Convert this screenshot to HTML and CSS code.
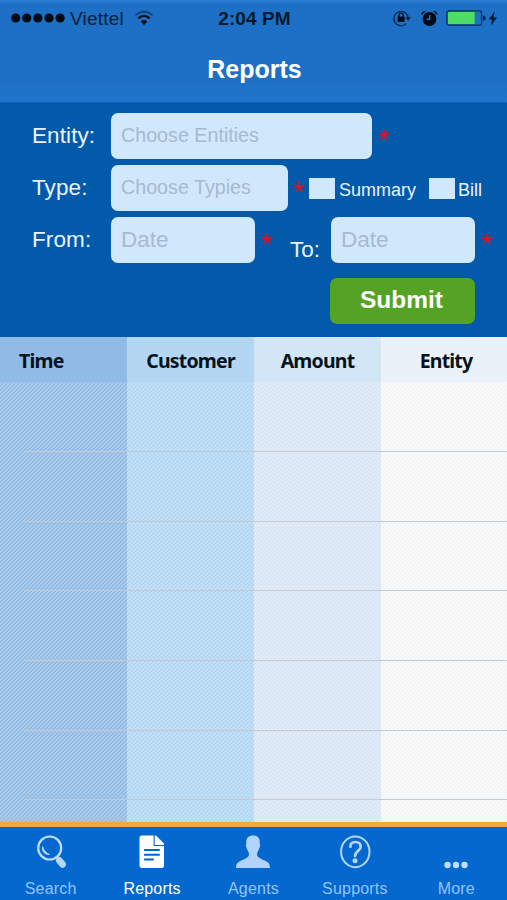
FILE: index.html
```html
<!DOCTYPE html>
<html lang="en">
<head>
<meta charset="utf-8">
<title>Reports</title>
<link rel="stylesheet" href="styles.css">
</head>
<body>
<div class="app">
  <header class="top">
    <div class="status">
      <div class="status-left">
        <svg class="signal" width="54" height="10" viewBox="0 0 54 10"><circle cx="4.7" cy="5" r="4.6"/><circle cx="15.8" cy="5" r="4.6"/><circle cx="26.9" cy="5" r="4.6"/><circle cx="38" cy="5" r="4.6"/><circle cx="49.1" cy="5" r="4.6"/></svg>
        <span class="carrier">Viettel</span>
        <svg class="wifi" width="20" height="16" viewBox="0 0 20 16" fill="none"><path d="M1.5 5.3Q10 -2 18.5 5.3" stroke="#0c3f70" stroke-width="1.5"/><path d="M4.3 8.4Q10 3.4 15.7 8.4" stroke="#03101c" stroke-width="2.3"/><path d="M6.8 11.5Q10 8.6 13.2 11.5L10 15Z" fill="#020b14"/></svg>
      </div>
      <span class="clock">2:04 PM</span>
      <div class="status-right">
        <svg width="20" height="18" viewBox="0 0 20 18" fill="none"><path d="M14.2 14.6A7.2 7.2 0 1 1 16.2 9" stroke="#052c55" stroke-width="1.3"/><path d="M13.2 8.2H19L16.1 11.7Z" fill="#031a33"/><rect x="5.6" y="7.6" width="7" height="5.3" fill="#020b14"/><path d="M7 8V6.2a2.1 2.1 0 0 1 4.200 0V8" stroke="#020b14" stroke-width="1.3"/></svg>
        <svg class="alarm" width="17" height="17" viewBox="0 0 17 17" fill="none"><circle cx="8.500" cy="9" r="6.900" fill="#020b14"/><path d="M1 4.600Q1.500 2 4.400 1.300M16 4.600Q15.500 2 12.600 1.300" stroke="#020b14" stroke-width="1.300"/><path d="M8.700 5V9.300H5.400" stroke="#2073c4" stroke-width="1.500"/></svg>
        <svg class="battery" width="41" height="18" viewBox="0 0 41 18"><rect x=".8" y="1.700" width="34.800" height="14.600" rx="2.500" fill="none" stroke="#0a3c70" stroke-width="1.400"/><rect x="2" y="3" width="26.700" height="12" rx="1" fill="#4ddc64"/><path d="M37 6.500Q39.500 6.500 39.500 9T37 11.500Z" fill="#052648"/></svg>
        <svg class="bolt" width="10" height="15" viewBox="0 0 10 15"><path d="M6.600 .5L.8 8.500H4.300L3 14.500L9 6.400H5.500Z" fill="#03182d"/></svg>
      </div>
    </div>
    <h1 class="title">Reports</h1>
  </header>

  <main class="content">
    <form class="form">
      <div class="row">
        <label class="label">Entity:</label>
        <div class="field wide">Choose Entities</div>
        <svg class="star" viewBox="0 0 12 12"><path d="M6 .5V6L.8 4.300M6 6L11.200 4.300M6 6L2.700 10.700M6 6L9.300 10.700"/></svg>
      </div>
      <div class="row">
        <label class="label">Type:</label>
        <div class="field medium">Choose Typies</div>
        <svg class="star near" viewBox="0 0 12 12"><path d="M6 .5V6L.8 4.300M6 6L11.200 4.300M6 6L2.700 10.700M6 6L9.300 10.700"/></svg>
        <span class="box first"></span><span class="check">Summary</span>
        <span class="box second"></span><span class="check bill">Bill</span>
      </div>
      <div class="row">
        <label class="label">From:</label>
        <div class="field date">Date</div>
        <svg class="star" viewBox="0 0 12 12"><path d="M6 .5V6L.8 4.300M6 6L11.200 4.300M6 6L2.700 10.700M6 6L9.300 10.700"/></svg>
        <label class="to">To:</label>
        <div class="field date">Date</div>
        <svg class="star" viewBox="0 0 12 12"><path d="M6 .5V6L.8 4.300M6 6L11.200 4.300M6 6L2.700 10.700M6 6L9.300 10.700"/></svg>
      </div>
      <button class="submit" type="button">Submit</button>
    </form>

    <section class="report">
      <div class="heads">
        <span class="head time">Time</span>
        <span class="head">Customer</span>
        <span class="head">Amount</span>
        <span class="head entity">Entity</span>
      </div>
      <div class="body">
        <div class="line"></div><div class="line"></div><div class="line"></div>
        <div class="line"></div><div class="line"></div><div class="line"></div>
      </div>
    </section>
  </main>

  <nav class="tabs">
    <div class="tab">
      <svg width="32" height="36" viewBox="0 0 32 36" fill="none"><circle cx="14.700" cy="14" r="11.500" stroke="#c0dcff" stroke-width="2.200"/><path d="M7.600 12.500C6.500 17 9.500 21 14.500 20.500C10.800 18.700 8.700 16.500 7.600 12.500Z" fill="#b7d6ff" stroke="#b7d6ff" stroke-width=".8"/><path d="M21.500 22.500L24.500 26" stroke="#b7d6ff" stroke-width="3"/><path d="M24.400 26.600L27.500 30.300" stroke="#b7d6ff" stroke-width="6.800" stroke-linecap="round"/></svg>
      <span>Search</span>
    </div>
    <div class="tab active">
      <svg width="32" height="36" viewBox="0 0 32 36"><path d="M6 1.500H17.600V12H28V31.500Q28 34 25.500 34H6Q3.500 34 3.500 31.500V4Q3.500 1.500 6 1.500Z" fill="#fff"/><path d="M18.700 1.500H20L28 9.500V10.900H18.700Z" fill="#fff"/><path d="M8.800 16H23M8.800 20.800H23M8.800 25.400H17" stroke="#0565ca" stroke-width="2" stroke-linecap="round"/></svg>
      <span>Reports</span>
    </div>
    <div class="tab">
      <svg width="36" height="36" viewBox="0 0 36 36"><path d="M18 1.500C22.700 1.500 25 4.200 24.700 8.500C24.700 11 25.600 11.500 24.400 14C23.400 17 22.300 17.700 22 20C21.800 22.800 24 23.800 28 25.800C33 28.200 34.700 28.500 35 34H1C1.300 28.500 3 28.200 8 25.800C12 23.800 14.200 22.800 14 20C13.700 17.700 12.600 17 11.600 14C10.400 11.500 11.300 11 11.300 8.500C11 4.200 13.300 1.500 18 1.500Z" fill="#b1d3ff"/></svg>
      <span>Agents</span>
    </div>
    <div class="tab">
      <svg width="32" height="36" viewBox="0 0 32 36" fill="none"><ellipse cx="16.300" cy="17.800" rx="14.200" ry="15.400" stroke="#b7d6ff" stroke-width="2"/><path d="M11.400 12.800C11.300 9.600 13.100 8 16.200 8C19.600 8 21.700 9.800 21.700 12.700C21.700 17.100 16.100 16.800 16.100 22" stroke="#b7d6ff" stroke-width="2.700" stroke-linecap="round"/><circle cx="16" cy="26.800" r="2.500" fill="#b7d6ff"/></svg>
      <span>Supports</span>
    </div>
    <div class="tab">
      <svg width="32" height="36" viewBox="0 0 32 36" fill="#c0dcff"><circle cx="7.500" cy="31" r="3.200"/><circle cx="16" cy="31" r="3.200"/><circle cx="24.500" cy="31" r="3.200"/></svg>
      <span>More</span>
    </div>
  </nav>
</div>
</body>
</html>
```
FILE: styles.css
```css
* { box-sizing: border-box; }

body {
  margin: 0;
  font-family: "Liberation Sans", Arial, sans-serif;
}

svg { display: block; flex: none; }

.app {
  width: 507px;
  height: 900px;
  display: flex;
  flex-direction: column;
  overflow: hidden;
  white-space: nowrap;
}

.top {
  height: 103px;
  flex: none;
  background: linear-gradient(#2e80d2 0, #1d70c5 4px, #1d70c5 80px, #2075cb);
  border-bottom: 1px solid #0e60b3;
}

.status {
  height: 36px;
  padding: 0 9px 0 11px;
  display: grid;
  grid-template-columns: 1fr auto 1fr;
  align-items: center;
}

.status-left, .status-right { display: flex; align-items: center; }
.status-right { justify-content: flex-end; }
.signal { fill: #020b14; }
.carrier { margin: 1px 0 0 5px; font-size: 19px; letter-spacing: .2px; color: #051e38; }
.wifi { margin-left: 10px; }
.clock { margin-top: 1px; font-size: 19px; font-weight: bold; letter-spacing: .1px; color: #03182d; }
.alarm { margin-left: 9px; }
.battery { margin-left: 8px; }
.bolt { margin-left: 1px; }

.title {
  margin: 0;
  height: 66px;
  padding-left: 2px;
  line-height: 66px;
  text-align: center;
  font-size: 25px;
  color: #fff;
}

.content { flex: 1; display: flex; flex-direction: column; min-height: 0; }

.form {
  height: 234px;
  flex: none;
  padding: 10px 0 0 32px;
  display: flex;
  flex-direction: column;
  gap: 6px;
  background: #0359aa;
}

.row { height: 46px; display: flex; align-items: center; }
.label { width: 79px; flex: none; font-size: 22.5px; letter-spacing: .1px; color: #e9f3ff; }

.field {
  height: 46px;
  line-height: 45px;
  flex: none;
  padding-left: 10px;
  border-radius: 7px;
  background: #d1e7fc;
  color: #a6bad0;
  font-size: 19.7px;
}
.wide { width: 261px; }
.medium { width: 177px; }
.date { width: 144px; line-height: 46px; font-size: 22.5px; }

.star {
  width: 12px;
  height: 12px;
  margin: 0 0 2px 6px;
  stroke: #d51628;
  stroke-width: 2;
  fill: none;
}
.near { margin-left: 5px; }

.box { width: 26px; height: 21px; flex: none; background: #d1e7fc; }
.first { margin-left: 4px; }
.second { margin-left: 13px; }
.check { margin: 4px 0 0 4px; font-size: 18px; color: #e9f3ff; }
.bill { margin-left: 3px; }
.to { width: 41px; margin: 19px 0 0 17px; font-size: 22.5px; color: #e9f3ff; }

.submit {
  width: 145px;
  height: 46px;
  margin: 9px 0 0 298px;
  padding: 0 2px 2px 0;
  border: 0;
  border-radius: 7px;
  background: #55a325;
  color: #fff;
  font: bold 24.5px "Liberation Sans", Arial, sans-serif;
}

.report {
  flex: 1;
  display: flex;
  flex-direction: column;
  background: linear-gradient(90deg, #9bc3ea 0 127px, #bbdcf8 127px 254px, #dfebf8 254px 381px, #fafafa 381px);
}

.heads {
  height: 45px;
  display: grid;
  grid-template-columns: 127px 127px 127px 126px;
  background: linear-gradient(90deg, #91bbe6 0 127px, #b3d6f3 127px 254px, #d3e6f5 254px 381px, #ebf1f8 381px);
}

.head {
  line-height: 47px;
  text-align: center;
  font-family: "Noto Sans", "Open Sans", sans-serif;
  font-size: 19.5px;
  font-weight: bold;
  letter-spacing: -0.8px;
  color: #07121c;
}
.time { text-align: left; padding-left: 19px; }
.entity { padding-left: 4px; }

.body {
  flex: 1;
  background: repeating-linear-gradient(135deg, rgba(70, 100, 130, .055) 0 1px, rgba(255, 255, 255, .12) 1.4px 2.4px, rgba(70, 100, 130, .055) 2.828px);
}

.line {
  height: 69.6px;
  margin-left: 24px;
  border-bottom: 1px solid #c5cad0;
}
.line:first-child { height: 70.2px; }

.tabs {
  height: 78px;
  flex: none;
  display: grid;
  grid-template-columns: repeat(5, 1fr);
  border-top: 5px solid #f3a83d;
  background: #0468cf;
}

.tab {
  padding-top: 7px;
  display: flex;
  flex-direction: column;
  align-items: center;
  font-size: 16px;
  letter-spacing: .2px;
  color: #94c4fb;
}
.tab span { margin-top: 9px; line-height: 20px; }
.active { color: #fff; }
```
